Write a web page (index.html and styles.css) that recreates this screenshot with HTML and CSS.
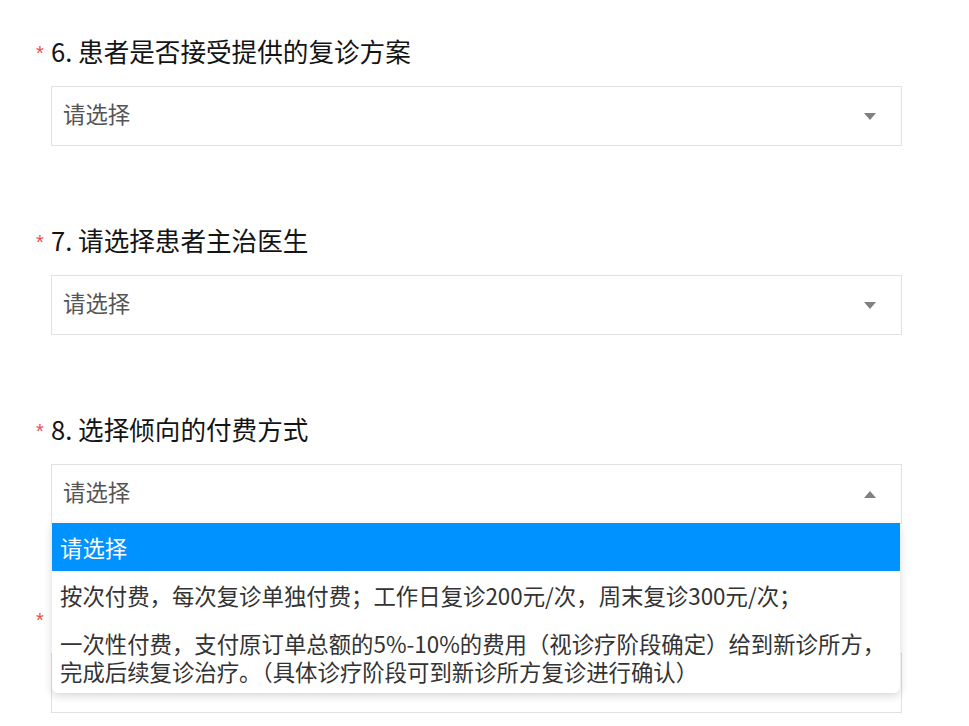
FILE: index.html
```html
<!DOCTYPE html>
<html lang="zh-CN">
<head>
<meta charset="utf-8">
<title>复诊问卷</title>
<link rel="stylesheet" href="styles.css">
</head>
<body>
<div class="form">
  <div class="q">
    <div class="q-title"><span class="req">*</span><span class="q-text">6. 患者是否接受提供的复诊方案</span></div>
    <div class="select"><span class="ph">请选择</span><span class="arrow"></span></div>
  </div>
  <div class="q">
    <div class="q-title"><span class="req">*</span><span class="q-text">7. 请选择患者主治医生</span></div>
    <div class="select"><span class="ph">请选择</span><span class="arrow"></span></div>
  </div>
  <div class="q">
    <div class="q-title"><span class="req">*</span><span class="q-text">8. 选择倾向的付费方式</span></div>
    <div class="select open"><span class="ph">请选择</span><span class="arrow up"></span>
      <ul class="dropdown">
        <li class="opt active">请选择</li>
        <li class="opt">按次付费，每次复诊单独付费；工作日复诊200元/次，周末复诊300元/次；</li>
        <li class="opt">一次性付费，支付原订单总额的5%-10%的费用（视诊疗阶段确定）给到新诊所方，<br>完成后续复诊治疗。（具体诊疗阶段可到新诊所方复诊进行确认）</li>
      </ul>
    </div>
  </div>
  <div class="q">
    <div class="q-title"><span class="req">*</span><span class="q-text"></span></div>
    <div class="select"><span class="ph"></span><span class="arrow"></span></div>
  </div>
</div>
</body>
</html>
```
FILE: styles.css
```css
html, body {
  margin: 0;
  padding: 0;
  background: #ffffff;
}
body {
  font-family: "Noto Sans CJK SC", "Liberation Sans", sans-serif;
  color: #1b1b1b;
}
.form {
  padding: 33px 0 0 51px;
  width: 851px;
}
.q {
  margin-bottom: 76px;
}
.q-title {
  display: flex;
  align-items: flex-start;
  height: 36px;
  margin-bottom: 17px;
}
.req {
  font-family: "Liberation Sans", sans-serif;
  font-size: 20px;
  line-height: 20px;
  width: 15px;
  margin-left: -15px;
  margin-top: 10px;
  color: #ee4b4b;
}
.q-text {
  font-size: 25.6px;
  line-height: 36px;
  color: #141414;
}
.select {
  position: relative;
  box-sizing: border-box;
  height: 60px;
  border: 1px solid #e1e1e1;
  display: flex;
  align-items: center;
  justify-content: space-between;
  padding: 0 25px 0 11px;
  background: #fff;
}
.ph {
  font-size: 22.4px;
  color: #555555;
  margin-bottom: 6px;
}
.arrow {
  width: 0;
  height: 0;
  border-left: 6px solid transparent;
  border-right: 6px solid transparent;
  border-top: 7px solid #808080;
}
.arrow.up {
  border-top: 0;
  border-bottom: 7px solid #808080;
}
.dropdown {
  position: absolute;
  top: 100%;
  left: 0;
  right: 1px;
  margin: 0;
  padding: 0;
  list-style: none;
  background: #fff;
  max-height: 170px;
  overflow: hidden;
  border-radius: 0 0 6px 6px;
  box-shadow: 0 3px 8px rgba(0, 0, 0, 0.16);
  z-index: 10;
}
.opt {
  padding: 10px 8px;
  font-size: 22.4px;
  line-height: 28px;
  color: #333333;
  white-space: nowrap;
}
.opt.active {
  background: #0092ff;
  color: #ffffff;
}
```
